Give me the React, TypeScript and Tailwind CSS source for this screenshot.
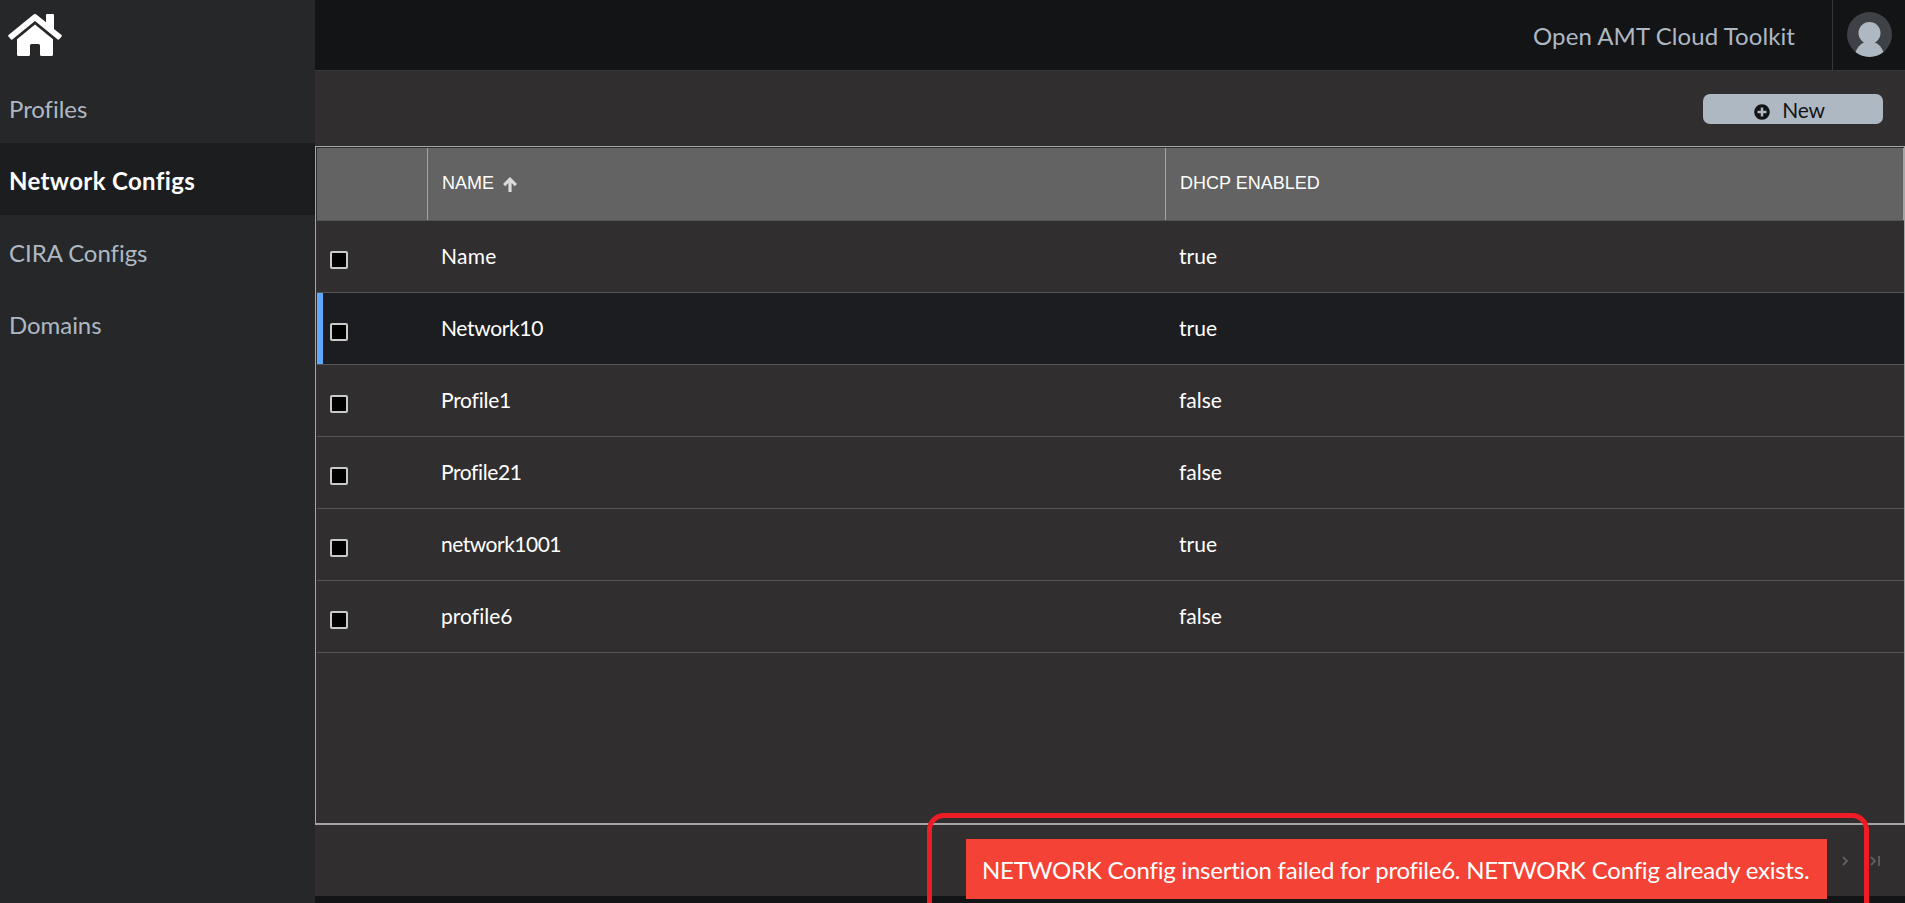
import { FaPlusCircle } from "react-icons/fa";

const navItems = ["Profiles", "Network Configs", "CIRA Configs", "Domains"];

const rows = [
  { name: "Name", dhcp: "true", tracking: "tracking-[0.3px]" },
  { name: "Network10", dhcp: "true", tracking: "tracking-[-0.35px]" },
  { name: "Profile1", dhcp: "false", tracking: "tracking-[-0.25px]" },
  { name: "Profile21", dhcp: "false", tracking: "tracking-[-0.4px]" },
  { name: "network1001", dhcp: "true", tracking: "tracking-[-0.5px]" },
  { name: "profile6", dhcp: "false", tracking: "tracking-[0.03px]" },
];

function HomeIcon() {
  return (
    <svg viewBox="0 0 54 42" className="h-[42px] w-[54px]" fill="#fff">
      <path d="M25 0.900Q27 -0.700 29 0.900L38 8.300V1Q38 0 39 0H45Q46 0 46 1V14.900L53.500 21Q54.300 21.700 53.600 22.500L51.200 25.300Q50.500 26.100 49.700 25.400L27 7L4.300 25.400Q3.500 26.100 2.800 25.300L0.400 22.500Q-0.300 21.700 0.500 21Z" />
      <path d="M27 10.500L45 25.200V40.500Q45 42 43.500 42H33.500Q32 42 32 40.500V31.500Q32 30 30.500 30H23.500Q22 30 22 31.500V40.500Q22 42 20.500 42H10.500Q9 42 9 40.500V25.200Z" />
    </svg>
  );
}

function Sidebar() {
  return (
    <nav className="flex w-[315px] shrink-0 flex-col bg-[#252729]">
      <div className="h-[71px] pl-2 pt-[14px]">
        <HomeIcon />
      </div>
      {navItems.map((item) => (
        <a
          key={item}
          className={
            item === "Network Configs"
              ? "flex h-[72px] items-center bg-[#1c1d1f] pl-[9px] pt-[3px] text-[24px] font-bold tracking-[0.35px] text-white"
              : "flex h-[72px] items-center pl-[9px] pt-[3px] text-[24px] tracking-[-0.05px] text-[#aeb8c3]"
          }
        >
          {item}
        </a>
      ))}
    </nav>
  );
}

function TopBar() {
  return (
    <header className="flex h-[71px] shrink-0 border-b border-[#35393d] bg-[#131416]">
      <div className="flex flex-1 items-center justify-end pr-[37px] pt-px text-[24px] tracking-[0.08px] text-[#aeb8c3]">
        Open AMT Cloud Toolkit
      </div>
      <div className="flex w-[73px] items-start border-l border-[#35393d] pl-[14px] pt-3">
        <svg viewBox="0 0 45 45" className="h-[45px] w-[45px]">
          <circle cx="22.5" cy="22.5" r="22.5" fill="#3e4146" />
          <circle cx="22.5" cy="21" r="11" fill="#aeb8c3" />
          <path d="M8.500 40C11 34 15 30.500 19 30H26C30 30.500 34 34 36.500 40C28 46.500 17 46.500 8.500 40Z" fill="#aeb8c3" />
        </svg>
      </div>
    </header>
  );
}

function Grid() {
  return (
    <section className="flex h-[679px] flex-col border border-b-2 border-[#a5a5a5] pl-px pt-px">
      <div className="flex h-[73px] shrink-0 border-b border-[#555] bg-[#636363] font-['Liberation_Sans',Arial,sans-serif] text-[18px] text-white">
        <div className="w-[111px] border-r border-[#a5a5a5]" />
        <div className="flex w-[738px] items-center gap-[9px] border-r border-[#a5a5a5] pl-[14px] pb-[2px]">
          <span>NAME</span>
          <svg viewBox="0 0 14 15" className="mt-[2px] h-[15px] w-[14px]" fill="none" stroke="#dadada" strokeWidth="3.200">
            <path d="M7 15V2M1.100 8.100L7 2.200L12.900 8.100" />
          </svg>
        </div>
        <div className="flex flex-1 items-center border-r border-[#a5a5a5] pl-[14px] pb-[2px]">DHCP ENABLED</div>
      </div>
      {rows.map((row) => (
        <div
          key={row.name}
          className={
            row.name === "Network10"
              ? "flex h-[72px] shrink-0 items-center border-b border-[#555] bg-[#1b1d20] text-[21px] text-white shadow-[inset_6px_0_0_#5ea8ff]"
              : "flex h-[72px] shrink-0 items-center border-b border-[#555] text-[21px] text-white"
          }
        >
          <div className="w-[111px] pl-[13px] pt-[7px]">
            <div className="h-[18px] w-[18px] rounded-[2px] border-2 border-[#c8c8c8] bg-black" />
          </div>
          <div className={`w-[738px] pb-[2px] pl-[13px] ${row.tracking}`}>{row.name}</div>
          <div className="flex-1 pb-[2px] pl-[13px]">{row.dhcp}</div>
        </div>
      ))}
    </section>
  );
}

function Pager() {
  return (
    <div className="flex h-[71px] justify-end gap-[22px] pr-[25px] pt-[31px]">
      <svg viewBox="0 0 6 10" className="h-[10px] w-[6px]" fill="none" stroke="#606062" strokeWidth="1.800">
        <path d="M1 1L5 5L1 9" />
      </svg>
      <svg viewBox="0 0 10 10" className="h-[10px] w-[10px]" fill="none" stroke="#606062" strokeWidth="1.800">
        <path d="M1 1L5 5L1 9M9 0V10" />
      </svg>
    </div>
  );
}

export default function App() {
  return (
    <div className="relative flex h-[903px] w-[1905px] overflow-hidden bg-[#131416] font-['Lato','Noto_Sans',sans-serif]">
      <Sidebar />
      <main className="flex flex-1 flex-col">
        <TopBar />
        <div className="h-[825px] bg-[#312e2f]">
          <div className="flex h-[75px] justify-end pr-[22px] pt-[23px]">
            <button className="flex h-[30px] w-[180px] items-center justify-center gap-3 rounded-[7px] bg-[#aeb8c3] pr-[7px] text-[21px] text-[#131416]">
              <FaPlusCircle className="mt-[5px] h-4 w-4" />
              <span className="pt-[2px] tracking-[-0.3px]">New</span>
            </button>
          </div>
          <Grid />
          <Pager />
        </div>
      </main>
      <div className="absolute left-[927px] top-[813px] h-[130px] w-[942px] rounded-[17px] border-[5px] border-[#ee1c24]" />
      <div className="absolute left-[966px] top-[839px] flex h-[60px] w-[861px] items-center whitespace-nowrap bg-[#f44336] pl-[16px] pt-px text-[24px] tracking-[-0.22px] text-white">
        NETWORK Config insertion failed for profile6. NETWORK Config already exists.
      </div>
    </div>
  );
}
